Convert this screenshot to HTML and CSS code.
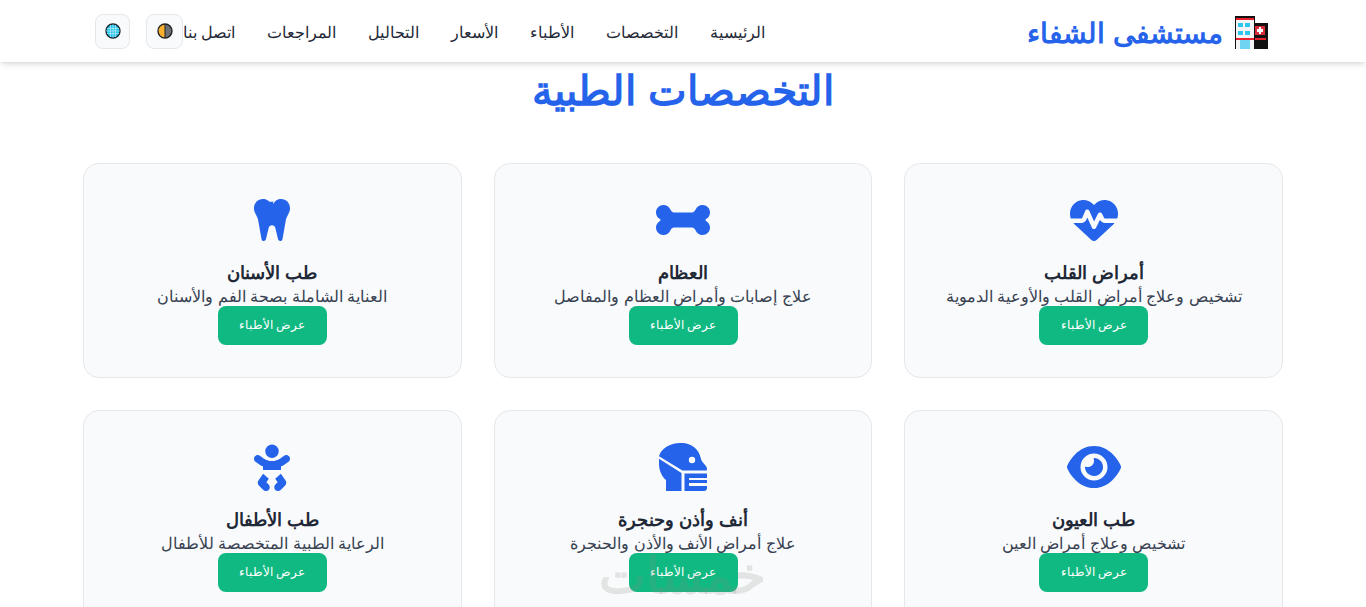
FILE: index.html

```html
<!DOCTYPE html>
<html lang="ar" dir="rtl">
<head>
  <meta charset="UTF-8" />
  <meta name="viewport" content="width=device-width, initial-scale=1" />
  <title>مستشفى الشفاء</title>
  <link rel="stylesheet" href="styles.css">
</head>
<body>
  <header class="site-header">
    <div class="header-inner">
      <a class="logo" href="#">
        <svg class="logo-icon" viewBox="0 0 33 33" shape-rendering="crispEdges">
          <rect x="0" y="0" width="20" height="33" fill="#111"/>
          <rect x="20" y="7" width="13" height="26" fill="#111"/>
          <rect x="1" y="2" width="18" height="31" fill="#f3f4f6"/>
          <rect x="1" y="2" width="18" height="2" fill="#e8212e"/>
          <rect x="3" y="7" width="5" height="4" fill="#2fc6ee"/>
          <rect x="10" y="7" width="5" height="4" fill="#2fc6ee"/>
          <rect x="3" y="15" width="5" height="4" fill="#2fc6ee"/>
          <rect x="10" y="15" width="5" height="4" fill="#2fc6ee"/>
          <rect x="1" y="22" width="18" height="2" fill="#e8212e"/>
          <rect x="5" y="24" width="10" height="9" fill="#6fd3f2"/>
          <rect x="20" y="10" width="10" height="9" fill="#d92c3a"/>
          <rect x="24" y="11" width="2" height="7" fill="#fff"/>
          <rect x="22" y="13" width="6" height="3" fill="#fff"/>
          <rect x="20" y="22" width="11" height="2" fill="#e8212e"/>
        </svg>
        <span>مستشفى الشفاء</span>
      </a>
      <nav class="main-nav">
        <a href="#">الرئيسية</a>
        <a href="#">التخصصات</a>
        <a href="#">الأطباء</a>
        <a href="#">الأسعار</a>
        <a href="#">التحاليل</a>
        <a href="#">المراجعات</a>
        <a href="#">اتصل بنا</a>
        <div class="header-tools">
          <button class="tool-btn tool-theme">
            <svg viewBox="0 0 16 16" width="16" height="16">
              <circle cx="8" cy="8" r="7" fill="#6b6f76" stroke="#222" stroke-width="1.4"/>
              <path d="M8 1.700a6.300 6.300 0 0 0 0 12.600z" fill="#fbb02d"/>
              <path d="M8 1v14" stroke="#222" stroke-width="1"/>
            </svg>
          </button>
          <button class="tool-btn">
            <svg viewBox="0 0 16 16" width="16" height="16">
              <circle cx="8" cy="8" r="7" fill="#27c4ec" stroke="#1f2b33" stroke-width="1.400"/>
              <path d="M2 5.500h12M1.500 8h13M2 10.500h12M5.500 2v12M8 1.500v13M10.500 2v12" stroke="#b9ecf8" stroke-width=".7" fill="none"/>
            </svg>
          </button>
        </div>
      </nav>
    </div>
  </header>

  <main class="specialties">
    <h1 class="section-title">التخصصات الطبية</h1>
    <div class="cards-grid">
      <div class="card">
        <svg class="card-icon" viewBox="0 0 512 512"><path d="M228.3 469.1L47.6 300.4c-4.2-3.9-8.2-8.1-11.9-12.4h87c22.6 0 43-13.600 51.700-34.500l10.500-25.200 49.300 109.500c3.800 8.500 12.100 14 21.400 14.100s17.800-5 22-13.300L320 253.700l1.700 3.400c9.500 19 28.900 31 50.100 31H476.300c-3.700 4.300-7.700 8.500-11.900 12.400L283.700 469.100c-7.500 7-17.400 10.900-27.700 10.900s-20.200-3.900-27.700-10.900zM503.700 240h-132c-3 0-5.800-1.700-7.200-4.400l-23.200-46.300c-4.100-8.100-12.400-13.300-21.500-13.300s-17.400 5.100-21.500 13.300l-41.400 82.800L205.900 158.200c-3.900-8.700-12.700-14.300-22.200-14.100s-18.100 5.900-21.800 14.800l-31.800 76.300c-1.200 3-4.200 4.900-7.400 4.900H16c-2.600 0-5 .4-7.300 1.100C3 225.200 0 208.200 0 190.900v-5.800c0-69.900 50.500-129.500 119.400-141C165 36.500 211.400 51.400 244 84l12 12 12-12c32.600-32.600 79-47.500 124.600-39.900C461.500 55.600 512 115.200 512 185.100v5.800c0 16.900-2.800 33.500-8.300 49.100z"/></svg>
        <h3>أمراض القلب</h3>
        <p>تشخيص وعلاج أمراض القلب والأوعية الدموية</p>
        <a class="card-btn" href="#">عرض الأطباء</a>
      </div>
      <div class="card">
        <svg class="card-icon" viewBox="0 0 576 512"><path d="M153.700 144.800c6.900 16.300 20.600 31.200 38.300 31.200H384c17.700 0 31.400-14.900 38.300-31.200C434.400 116.100 462.900 96 496 96c44.200 0 80 35.800 80 80c0 30.400-17 56.900-42 70.400c-3.600 1.900-6 5.500-6 9.600s2.400 7.700 6 9.600c25 13.500 42 40 42 70.400c0 44.200-35.800 80-80 80c-33.100 0-61.600-20.100-73.700-48.800C415.400 350.900 401.700 336 384 336H192c-17.700 0-31.400 14.900-38.300 31.200C141.600 395.900 113.100 416 80 416c-44.200 0-80-35.800-80-80c0-30.400 17-56.900 42-70.400c3.600-1.900 6-5.500 6-9.600s-2.400-7.700-6-9.600C17 232.900 0 206.400 0 176c0-44.200 35.800-80 80-80c33.100 0 61.600 20.100 73.700 48.800z"/></svg>
        <h3>العظام</h3>
        <p>علاج إصابات وأمراض العظام والمفاصل</p>
        <a class="card-btn" href="#">عرض الأطباء</a>
      </div>
      <div class="card">
        <svg class="card-icon" viewBox="0 0 448 512"><path d="M186.100 52.100C169.300 39.100 148.700 32 127.500 32C74.700 32 32 74.700 32 127.500v6.200c0 15.800 3.700 31.300 10.700 45.500l23.500 47.100c4.500 8.900 7.600 18.400 9.400 28.200l36.700 205.800c2 11.200 11.600 19.400 22.900 19.800s21.400-7.400 24-18.400l28.900-121.300C192.200 323.700 207 312 224 312s31.800 11.700 35.800 28.300l28.900 121.300c2.600 11.100 12.700 18.800 24 18.400s20.900-8.600 22.900-19.800l36.700-205.800c1.800-9.800 4.900-19.300 9.400-28.200l23.500-47.100c7.100-14.100 10.700-29.700 10.700-45.500v-6.200C416 74.700 373.300 32 320.500 32c-21.200 0-41.800 7.100-58.600 20.100L232 88L240 58C222 60 204 66 186.100 52.100z"/></svg>
        <h3>طب الأسنان</h3>
        <p>العناية الشاملة بصحة الفم والأسنان</p>
        <a class="card-btn" href="#">عرض الأطباء</a>
      </div>
      <div class="card">
        <svg class="card-icon" viewBox="0 0 576 512"><path d="M288 32c-80.800 0-145.500 36.800-192.600 80.600C48.600 156 17.300 208 2.500 243.700c-3.300 7.900-3.300 16.700 0 24.600C17.300 304 48.600 356 95.400 399.400C142.500 443.200 207.200 480 288 480s145.500-36.800 192.600-80.600c46.800-43.500 78.100-95.400 93-131.100c3.300-7.900 3.300-16.700 0-24.600c-14.900-35.700-46.200-87.700-93-131.100C433.500 68.800 368.800 32 288 32zM144 256a144 144 0 1 1 288 0 144 144 0 1 1 -288 0zm144-64c0 35.300-28.700 64-64 64c-7.100 0-13.900-1.200-20.300-3.300c-5.500-1.800-11.900 1.600-11.700 7.400c.3 6.900 1.300 13.800 3.200 20.700c13.700 51.200 66.400 81.600 117.600 67.900s81.600-66.400 67.900-117.600c-11.100-41.500-47.800-69.400-88.600-71.100c-5.800-.2-9.200 6.100-7.400 11.700c2.100 6.400 3.300 13.200 3.300 20.300z"/></svg>
        <h3>طب العيون</h3>
        <p>تشخيص وعلاج أمراض العين</p>
        <a class="card-btn" href="#">عرض الأطباء</a>
      </div>
      <div class="card">
        <svg class="card-icon" viewBox="0 0 512 512"><path d="M0 140C20 60 120 0 224 0h24c95 0 181 69 197 160c2 13 7 26 15 36l42 53c6 8 10 17 10 27c0 7-2 13-5 17H250z"/><circle cx="352" cy="181" r="34" fill="#f9fafb"/><path d="M0 168L240 320V512H75V395C30 360 0 290 0 224z"/><path d="M272 325H512V373H320V395H512V427H320V459H512V480c0 18-14 32-32 32H272z"/></svg>
        <h3>أنف وأذن وحنجرة</h3>
        <p>علاج أمراض الأنف والأذن والحنجرة</p>
        <a class="card-btn" href="#">عرض الأطباء</a>
      </div>
      <div class="card">
        <svg class="card-icon" viewBox="0 0 448 512"><path d="M152 88a72 72 0 1 1 144 0A72 72 0 1 1 152 88zM39.700 144.500c13-17.900 38-21.800 55.900-8.800L131.800 162c26.800 19.500 59.100 30 92.200 30s65.400-10.500 92.200-30l36.200-26.400c17.900-13 42.900-9 55.900 8.800s9 42.900-8.800 55.900l-36.200 26.400c-13.600 9.900-28.100 18.200-43.300 25V288H128V251.700c-15.200-6.700-29.700-15.100-43.300-25L48.500 200.300c-17.900-13-21.800-38-8.800-55.900zm89.800 184.800l60.600 53-26 37.200 24.300 24.300c15.600 15.600 15.600 40.900 0 56.600s-40.900 15.600-56.600 0l-48-48C70 438.600 68.100 417 79.200 401.100l50.200-71.800zm128.500 53l60.600-53 50.200 71.800c11.100 15.900 9.200 37.500-4.500 51.200l-48 48c-15.600 15.600-40.900 15.600-56.600 0s-15.600-40.900 0-56.600L284 419.400l-26-37.200z"/></svg>
        <h3>طب الأطفال</h3>
        <p>الرعاية الطبية المتخصصة للأطفال</p>
        <a class="card-btn" href="#">عرض الأطباء</a>
      </div>
    </div>
  </main>

  <div class="watermark">خمسات</div>
</body>
</html>
```

FILE: styles.css

```css
* { box-sizing: border-box; }
html, body { height: 100%; overflow: hidden; }
body { margin: 0; background: #fff; color: #1f2937; font-family: "Liberation Sans", sans-serif; }
a { color: inherit; text-decoration: none; }

.site-header { position: relative; z-index: 2; height: 62px; background: #fff; box-shadow: 0 4px 6px -1px rgba(0,0,0,0.1), 0 2px 4px -2px rgba(0,0,0,0.1); }
.header-inner { width: 1200px; height: 100%; margin: 0 auto; padding: 0 15px 0 12px; display: flex; align-items: center; justify-content: space-between; }
.logo { display: flex; align-items: center; gap: 12px; color: #2563eb; font-size: 27.7px; font-weight: 700; }
.logo span { padding-top: 4px; }
.logo-icon { width: 33px; height: 33px; margin-top: 3px; }
.main-nav { display: flex; align-items: center; gap: 32px; font-size: 15.5px; }
.main-nav a { padding-top: 3px; }
.header-tools { display: flex; align-items: center; gap: 16px; margin-right: -32px; }
.tool-btn { width: 35px; height: 35px; padding: 0; display: flex; align-items: center; justify-content: center; background: #f9fafb; border: 1px solid #e5e7eb; border-radius: 8px; }
.tool-theme { width: 37px; }

.specialties { width: 1200px; margin: 0 auto; padding-top: 6px; }
.section-title { margin: 0 0 51px; height: 44px; line-height: 46px; text-align: center; color: #2563eb; font-size: 41px; font-weight: 700; }
.cards-grid { display: grid; grid-template-columns: repeat(3, 1fr); gap: 32px; }
.card { height: 215px; padding: 32px; text-align: center; background: #f9fafb; border: 1px solid #e5e7eb; border-radius: 16px; }
.card-icon { display: block; height: 48px; margin: 0 auto 16px; fill: #2563eb; }
.card h3 { margin: 0; height: 26px; line-height: 26px; font-size: 17.6px; font-weight: 700; color: #1f2937; }
.card p { margin: 0; height: 20px; line-height: 22px; font-size: 16px; color: #374151; white-space: nowrap; }
.card-btn { display: block; position: relative; width: 109px; height: 39px; margin: 0 auto; line-height: 38px; background: #10b981; color: #fff; font-size: 11.5px; border-radius: 8px; }

.watermark { position: fixed; left: 601px; top: 546px; width: 165px; text-align: center; font-size: 50px; font-weight: 700; line-height: 60px; color: rgba(130,140,135,0.2); white-space: nowrap; z-index: 3; pointer-events: none; }
```
